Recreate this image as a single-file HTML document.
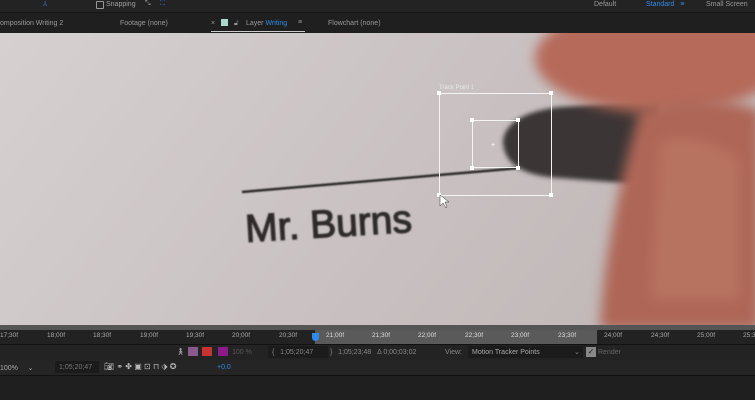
<!DOCTYPE html>
<html><head><meta charset="utf-8"><style>
*{margin:0;padding:0;box-sizing:border-box}
body{width:755px;height:400px;background:#1e1e1e;font-family:"Liberation Sans",sans-serif;font-size:7px;color:#9a9a9a;position:relative;overflow:hidden}
.a{position:absolute;white-space:nowrap}
</style></head><body>
<div class="a" style="left:0;top:0;width:755px;height:12px;background:#232323"></div>
<div class="a" style="left:0;top:12px;width:755px;height:1px;background:#151515"></div>
<div class="a" style="left:96px;top:1px;width:8px;height:8px;border:1px solid #999;border-radius:1px"></div>
<div class="a" style="left:106px;top:1px;color:#a0a0a0">Snapping</div>
<div class="a" style="left:145px;top:0px;color:#aaa">⤡</div>
<div class="a" style="left:160px;top:0px;color:#2d8ceb">⛶</div>
<div class="a" style="left:43px;top:0px;color:#2d6fc7">⅄</div>
<div class="a" style="left:594px;top:1px;color:#9a9a9a">Default</div>
<div class="a" style="left:646px;top:1px;color:#2d8ceb">Standard &nbsp;&nbsp;≡</div>
<div class="a" style="left:706px;top:1px;color:#9a9a9a">Small Screen</div>
<div class="a" style="left:0;top:13px;width:755px;height:20px;background:#1f1f1f"></div>
<div class="a" style="left:0;top:20px">omposition Writing 2</div>
<div class="a" style="left:120px;top:20px">Footage (none)</div>
<div class="a" style="left:211px;top:20px">×</div>
<div class="a" style="left:221px;top:19px;width:7px;height:7px;background:#a8d8cc"></div>
<div class="a" style="left:234px;top:20px">🔓︎</div>
<div class="a" style="left:246px;top:20px">Layer <span style="color:#2d8ceb">Writing</span></div>
<div class="a" style="left:298px;top:19px">≡</div>
<div class="a" style="left:211px;top:31px;width:94px;height:1px;background:#ccc"></div>
<div class="a" style="left:328px;top:20px">Flowchart (none)</div>
<svg class="a" style="left:0;top:33px" width="755" height="292" viewBox="0 33 755 292">
<defs>
<linearGradient id="p" x1="0" y1="0" x2="1" y2="0.3"><stop offset="0" stop-color="#d6d0d0"/><stop offset="1" stop-color="#c2b9b9"/></linearGradient>
<filter id="b"><feGaussianBlur stdDeviation="6"/></filter>
<filter id="b2"><feGaussianBlur stdDeviation="2.5"/></filter>
<filter id="b1"><feGaussianBlur stdDeviation="0.8"/></filter>
</defs>
<rect x="0" y="33" width="755" height="292" fill="url(#p)"/>
<path d="M242 192 L520 168" stroke="#2a2626" stroke-width="2.5" filter="url(#b1)"/>
<text x="246" y="242" font-size="39" font-family="Liberation Sans" fill="#2f2a2a" stroke="#2f2a2a" stroke-width="1.2" filter="url(#b1)" transform="rotate(-3.5 246 242)">Mr. Burns</text>
<path d="M503 140 Q508 113 560 107 L660 100 L650 185 L560 178 Q503 175 503 140Z" fill="#3a3536" filter="url(#b2)"/>
<ellipse cx="660" cy="58" rx="125" ry="55" fill="#b66a5a" filter="url(#b)"/>
<path d="M640 110 Q700 90 760 110 L760 330 L600 330 Q605 230 640 110Z" fill="#ae6656" filter="url(#b)"/>
<path d="M660 140 Q700 130 740 160 L740 300 L650 300Z" fill="#c07a68" filter="url(#b)" opacity="0.6"/>
<g stroke="#f4f4f4" fill="none" stroke-width="1">
<rect x="439.5" y="93.5" width="112" height="102"/>
<rect x="472.5" y="120.5" width="46" height="47"/>
</g>
<g fill="#fff">
<rect x="437" y="91" width="4" height="4"/><rect x="549" y="91" width="4" height="4"/><rect x="437" y="193" width="4" height="4"/><rect x="549" y="193" width="4" height="4"/>
<rect x="470" y="118" width="4" height="4"/><rect x="516" y="118" width="4" height="4"/><rect x="470" y="166" width="4" height="4"/><rect x="516" y="166" width="4" height="4"/>
</g>
<text x="439" y="89" font-size="6" fill="#e8e8e8" font-family="Liberation Sans">Track Point 1</text>
<text x="491" y="147" font-size="7" fill="#fff">+</text>
<path d="M440 195 L440 206 L443 203 L446 208 L447 207 L445 202 L449 202Z" fill="#fff" stroke="#333" stroke-width="0.5"/>
</svg>
<div class="a" style="left:0;top:325px;width:755px;height:5px;background:#555"></div>
<div class="a" style="left:0;top:330px;width:755px;height:14px;background:#222"></div>
<div class="a" style="left:315px;top:330px;width:282px;height:14px;background:#5a5a5a"></div>
<div class="a" style="left:0;top:332px;font-size:6.5px;color:#aaa;word-spacing:0">
<span class="a" style="left:0">17;30f</span><span class="a" style="left:47px">18;00f</span><span class="a" style="left:93px">18;30f</span><span class="a" style="left:140px">19;00f</span><span class="a" style="left:186px">19;30f</span><span class="a" style="left:232px">20;00f</span><span class="a" style="left:279px">20;30f</span><span class="a" style="left:326px;color:#ddd">21;00f</span><span class="a" style="left:372px;color:#ddd">21;30f</span><span class="a" style="left:418px;color:#ddd">22;00f</span><span class="a" style="left:465px;color:#ddd">22;30f</span><span class="a" style="left:511px;color:#ddd">23;00f</span><span class="a" style="left:558px;color:#ddd">23;30f</span><span class="a" style="left:604px">24;00f</span><span class="a" style="left:651px">24;30f</span><span class="a" style="left:697px">25;00f</span><span class="a" style="left:743px">25:3</span></div>
<div class="a" style="left:312px;top:333px;width:7px;height:8px;background:#2d8ceb;border-radius:0 0 4px 4px"></div>
<div class="a" style="left:0;top:344px;width:755px;height:1px;background:#111"></div>
<div class="a" style="left:0;top:345px;width:755px;height:15px;background:#232323"></div>
<div class="a" style="left:176px;top:348px">🚶︎</div>
<div class="a" style="left:188px;top:347px;width:10px;height:9px;background:#8a5a8c"></div>
<div class="a" style="left:202px;top:347px;width:10px;height:9px;background:#c83232"></div>
<div class="a" style="left:218px;top:347px;width:10px;height:9px;background:#8c1a8c"></div>
<div class="a" style="left:232px;top:349px;color:#555">100 %</div>
<div class="a" style="left:268px;top:346px;width:60px;height:12px;background:#1b1b1b"></div>
<div class="a" style="left:272px;top:349px;color:#888">{ &nbsp;&nbsp;1;05;20;47</div>
<div class="a" style="left:330px;top:349px;color:#888">} &nbsp;&nbsp;1;05;23;48 &nbsp;&nbsp;Δ 0;00;03;02</div>
<div class="a" style="left:445px;top:349px;color:#888">View:</div>
<div class="a" style="left:468px;top:346px;width:115px;height:12px;background:#1b1b1b"></div>
<div class="a" style="left:472px;top:349px;color:#aaa">Motion Tracker Points</div>
<div class="a" style="left:574px;top:348px;color:#888">⌄</div>
<div class="a" style="left:586px;top:347px;width:10px;height:10px;background:#888;color:#222;font-size:8px;line-height:10px;text-align:center">✓</div>
<div class="a" style="left:598px;top:349px;color:#666">Render</div>
<div class="a" style="left:0;top:360px;width:755px;height:15px;background:#252525"></div>
<div class="a" style="left:0;top:364px;color:#aaa">100% &nbsp;&nbsp;&nbsp;&nbsp;⌄</div>
<div class="a" style="left:55px;top:361px;width:44px;height:12px;background:#1b1b1b"></div>
<div class="a" style="left:59px;top:364px;color:#777">1;05;20;47</div>
<div class="a" style="left:104px;top:362px;color:#bbb;font-size:8px">📷︎ ⚭ ✤ ▣ ⊡ ⊓ ⬗ ✪</div>
<div class="a" style="left:217px;top:364px;color:#2d8ceb">+0.0</div>
<div class="a" style="left:0;top:375px;width:755px;height:1px;background:#111"></div>
<div class="a" style="left:0;top:376px;width:755px;height:24px;background:#1f1f1f"></div>
</body></html>
